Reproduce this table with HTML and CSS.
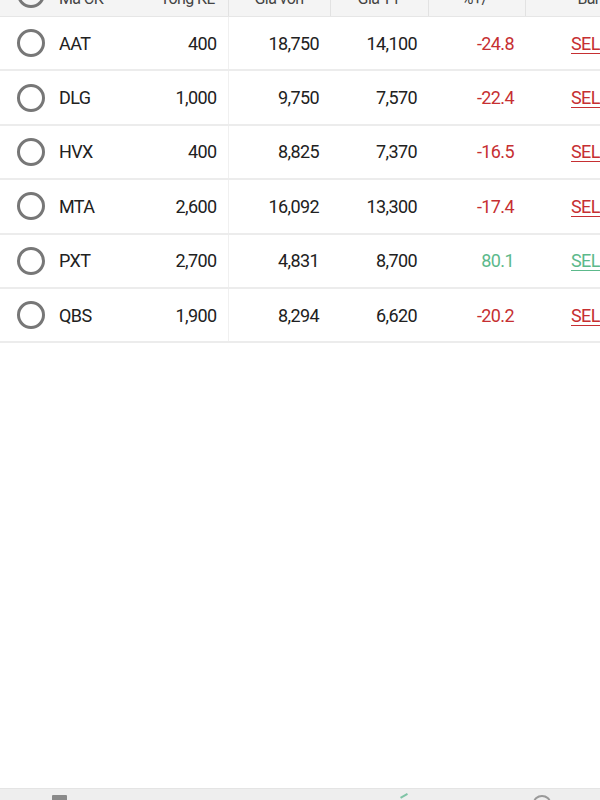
FILE: index.html
```html
<!DOCTYPE html>
<html>
<head>
    <title>Danh mục</title>
    <link rel="stylesheet" href="styles.css">
</head>
<body>
    <div class="screen">
        <div class="table-wrap">
            <table class="portfolio">
                <colgroup>
                    <col class="c-radio">
                    <col class="c-code">
                    <col class="c-kl">
                    <col class="c-von">
                    <col class="c-tt">
                    <col class="c-pct">
                    <col class="c-sell">
                </colgroup>
                <thead>
                    <tr>
                        <th class="radio-cell"><span class="radio"></span></th>
                        <th class="left">Mã CK</th>
                        <th class="right split">Tổng KL</th>
                        <th class="split">Giá vốn</th>
                        <th class="split">Giá TT</th>
                        <th class="split">%+/-</th>
                        <th>Bán</th>
                    </tr>
                </thead>
                <tbody>
                    <tr>
                        <td class="radio-cell"><span class="radio"></span></td>
                        <td>AAT</td>
                        <td class="num split">400</td>
                        <td class="num">18,750</td>
                        <td class="num">14,100</td>
                        <td class="num down">-24.8</td>
                        <td class="sell down">SELL</td>
                    </tr>
                    <tr>
                        <td class="radio-cell"><span class="radio"></span></td>
                        <td>DLG</td>
                        <td class="num split">1,000</td>
                        <td class="num">9,750</td>
                        <td class="num">7,570</td>
                        <td class="num down">-22.4</td>
                        <td class="sell down">SELL</td>
                    </tr>
                    <tr>
                        <td class="radio-cell"><span class="radio"></span></td>
                        <td>HVX</td>
                        <td class="num split">400</td>
                        <td class="num">8,825</td>
                        <td class="num">7,370</td>
                        <td class="num down">-16.5</td>
                        <td class="sell down">SELL</td>
                    </tr>
                    <tr>
                        <td class="radio-cell"><span class="radio"></span></td>
                        <td>MTA</td>
                        <td class="num split">2,600</td>
                        <td class="num">16,092</td>
                        <td class="num">13,300</td>
                        <td class="num down">-17.4</td>
                        <td class="sell down">SELL</td>
                    </tr>
                    <tr>
                        <td class="radio-cell"><span class="radio"></span></td>
                        <td>PXT</td>
                        <td class="num split">2,700</td>
                        <td class="num">4,831</td>
                        <td class="num">8,700</td>
                        <td class="num up">80.1</td>
                        <td class="sell up">SELL</td>
                    </tr>
                    <tr>
                        <td class="radio-cell"><span class="radio"></span></td>
                        <td>QBS</td>
                        <td class="num split">1,900</td>
                        <td class="num">8,294</td>
                        <td class="num">6,620</td>
                        <td class="num down">-20.2</td>
                        <td class="sell down">SELL</td>
                    </tr>
                </tbody>
            </table>
        </div>
        <div class="bottom-nav">
            <span class="nav-icon menu"></span>
            <span class="nav-icon chart"></span>
            <span class="nav-icon user"></span>
        </div>
    </div>
</body>
</html>
```

FILE: styles.css
```css
body {
    margin: 0;
    padding: 0;
    background-color: #fff;
    font-family: Roboto, "Noto Sans", sans-serif;
    color: #212121;
}
.screen {
    display: flex;
    flex-direction: column;
    height: 800px;
    overflow: hidden;
}
.table-wrap {
    overflow: hidden;
    flex: none;
}
.portfolio {
    width: 655px;
    table-layout: fixed;
    border-collapse: collapse;
    margin-top: -40px; /* list is scrolled a little */
    font-size: 18px;
    letter-spacing: -0.6px;
}
.c-radio { width: 59px; }
.c-code { width: 71px; }
.c-kl { width: 98px; }
.c-von { width: 102px; }
.c-tt { width: 98px; }
.c-pct { width: 97px; }
.c-sell { width: 130px; }

.portfolio th {
    height: 36px;
    padding: 20px 0 0;
    background-color: #f4f4f4;
    color: #444;
    font-weight: normal;
    font-size: 16px;
    text-align: center;
    border-bottom: 1px solid #e6e6e6;
}
.portfolio th.left { text-align: left; }
.portfolio th.right { text-align: right; padding-right: 13px; }
.portfolio th.split { border-right: 1px solid #e2e2e2; }

.portfolio td {
    height: 52.4px;
    padding: 0;
    border-bottom: 2px solid #ececec;
}
.portfolio td.num {
    text-align: right;
    padding-right: 11px;
}
.portfolio td.split { border-right: 1px solid #f0f0f0; }

.radio-cell { text-align: left; }
.portfolio th.radio-cell { padding: 12px 0 0; }
.radio {
    display: block;
    width: 22px;
    height: 22px;
    margin-left: 17px;
    border: 3px solid #777;
    border-radius: 50%;
}

.down { color: #c62f32; }
.up { color: #5cb98b; }
.sell {
    padding-left: 46px !important;
    text-decoration: underline;
    text-underline-offset: 3px;
}

.bottom-nav {
    margin-top: auto;
    height: 11px;
    background-color: #eeeeee;
    border-top: 1px solid #e4e4e4;
    position: relative;
    overflow: hidden;
}
.nav-icon {
    position: absolute;
    top: 6px;
    height: 12px;
}
.nav-icon.menu {
    left: 52px;
    width: 15px;
    background-color: #8a8a8a;
    border-radius: 1px;
}
.nav-icon.chart {
    left: 403px;
    width: 8px;
    top: 5px;
    border-top: 2px solid #7fc4a6;
    transform: rotate(-30deg);
}
.nav-icon.user {
    left: 533px;
    width: 14px;
    border: 2px solid #9a9a9a;
    border-radius: 50%;
}
```
